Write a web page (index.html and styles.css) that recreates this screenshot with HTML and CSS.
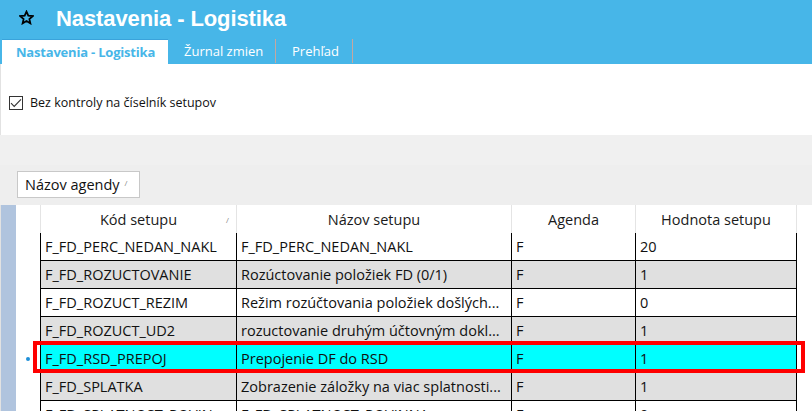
FILE: index.html
```html
<!DOCTYPE html>
<html lang="sk">
<head>
<meta charset="utf-8">
<title>Nastavenia - Logistika</title>
<link rel="stylesheet" href="styles.css">
</head>
<body>
<div class="app">
  <header class="header">
    <div class="titlebar">
      <svg class="star" width="15" height="15" viewBox="0 0 24 24"><path d="M12 2.5l2.9 6.6 7.1.6-5.4 4.7 1.6 7-6.2-3.7-6.2 3.7 1.6-7L2 9.7l7.1-.6z" fill="none" stroke="#000" stroke-width="2.8" stroke-linejoin="miter"/></svg>
      <h1 class="title">Nastavenia - Logistika</h1>
    </div>
    <nav class="tabs">
      <div class="tab tab-active">Nastavenia - Logistika</div>
      <div class="tab tab-2">Žurnal zmien</div>
      <div class="tab tab-3">Prehľad</div>
    </nav>
  </header>
  <section class="options">
    <label class="check">
      <span class="box"><svg width="12" height="10" viewBox="0 0 12 10"><path d="M1 5.2l3.2 3.2L11 1.3" fill="none" stroke="#333" stroke-width="1.1"/></svg></span>
      <span class="check-label">Bez kontroly na číselník setupov</span>
    </label>
  </section>
  <section class="group-panel">
    <div class="group-btn">Názov agendy <span class="sort">/</span></div>
  </section>
  <section class="grid">
    <div class="strip"></div>
    <div class="gridbody">
      <div class="row head">
        <div class="ind"></div>
        <div class="hc">Kód setupu<span class="sort hs">/</span></div>
        <div class="hc">Názov setupu</div>
        <div class="hc">Agenda</div>
        <div class="hc">Hodnota setupu</div>
      </div>
      <div class="row">
        <div class="ind"></div>
        <div class="c">F_FD_PERC_NEDAN_NAKL</div>
        <div class="c">F_FD_PERC_NEDAN_NAKL</div>
        <div class="c">F</div>
        <div class="c">20</div>
      </div>
      <div class="row alt">
        <div class="ind"></div>
        <div class="c">F_FD_ROZUCTOVANIE</div>
        <div class="c">Rozúctovanie položiek FD (0/1)</div>
        <div class="c">F</div>
        <div class="c">1</div>
      </div>
      <div class="row">
        <div class="ind"></div>
        <div class="c">F_FD_ROZUCT_REZIM</div>
        <div class="c">Režim rozúčtovania položiek došlých...</div>
        <div class="c">F</div>
        <div class="c">0</div>
      </div>
      <div class="row alt">
        <div class="ind"></div>
        <div class="c">F_FD_ROZUCT_UD2</div>
        <div class="c">rozuctovanie druhým účtovným dokl...</div>
        <div class="c">F</div>
        <div class="c">1</div>
      </div>
      <div class="row sel">
        <div class="ind"><span class="dot"></span></div>
        <div class="c">F_FD_RSD_PREPOJ</div>
        <div class="c">Prepojenie DF do RSD</div>
        <div class="c">F</div>
        <div class="c">1</div>
      </div>
      <div class="row alt">
        <div class="ind"></div>
        <div class="c">F_FD_SPLATKA</div>
        <div class="c">Zobrazenie záložky na viac splatnosti...</div>
        <div class="c">F</div>
        <div class="c">1</div>
      </div>
      <div class="row">
        <div class="ind"></div>
        <div class="c">F_FD_SPLATNOST_POVIN</div>
        <div class="c">F_FD_SPLATNOST_POVINNA</div>
        <div class="c">F</div>
        <div class="c">0</div>
      </div>
    </div>
  </section>
</div>
</body>
</html>
```

FILE: styles.css
```css
html, body {
  margin: 0;
  padding: 0;
  background: #ffffff;
}
body {
  font-family: "Open Sans", "Noto Sans", sans-serif;
  color: #000;
}
.app {
  width: 812px;
  height: 411px;
  overflow: hidden;
  display: flex;
  flex-direction: column;
}
.header {
  background: #47b6e8;
  height: 64px;
  display: flex;
  flex-direction: column;
  flex: none;
}
.titlebar {
  height: 39px;
  display: flex;
  align-items: center;
}
.star {
  margin-left: 19px;
  margin-top: -4px;
}
.title {
  margin: -2px 0 0 22px;
  font-family: "Liberation Sans", Arial, sans-serif;
  font-weight: bold;
  font-size: 22px;
  color: #ffffff;
  letter-spacing: -0.1px;
}
.tabs {
  height: 25px;
  display: flex;
  align-items: stretch;
}
.tab {
  display: flex;
  align-items: center;
  font-size: 13px;
  color: #ffffff;
  padding: 0 0 0 16px;
  border-right: 1px solid #c4a7a0;
  margin-bottom: 1px;
  white-space: nowrap;
  box-sizing: border-box;
}
.tab-active {
  margin-left: 2px;
  margin-bottom: 0;
  width: 166px;
  padding: 0 0 0 14px;
  background: #ffffff;
  border-top: 1px solid #3aa3db;
  border-right: none;
  color: #47b6e8;
  font-weight: bold;
  font-size: 13px;
  letter-spacing: -0.2px;
}
.tab-2 {
  width: 108px;
}
.tab-3 {
  width: 77px;
}
.options {
  flex: none;
  height: 71px;
  border-left: 1px solid #e2e2e2;
  background: #fff;
  display: flex;
  align-items: center;
  padding-left: 8px;
  padding-top: 6px;
  box-sizing: border-box;
}
.check {
  display: flex;
  align-items: center;
  font-size: 12.5px;
  color: #111;
}
.box {
  width: 14px;
  height: 14px;
  box-sizing: border-box;
  border: 1px solid #333;
  display: flex;
  align-items: center;
  justify-content: center;
  margin-right: 7px;
  background: #fff;
}
.group-panel {
  flex: none;
  height: 70px;
  box-sizing: border-box;
  padding: 36px 0 0 17px;
  background: linear-gradient(#f0f0f0 30px, #eeeeee 30px);
}
.group-btn {
  display: inline-flex;
  align-items: center;
  height: 27px;
  width: 123px;
  box-sizing: border-box;
  border: 1px solid #c8c8c8;
  background: #fff;
  padding-left: 7px;
  font-size: 14.5px;
  color: #111;
  white-space: nowrap;
}
.sort {
  font-size: 8px;
  color: #888;
  margin-left: 5px;
  margin-top: -4px;
}
.grid {
  flex: 1;
  display: flex;
  background: #fff;
  border-left: 1px solid #e2e2e2;
}
.strip {
  width: 15px;
  background: #b0c4de;
  flex: none;
}
.gridbody {
  flex: 1;
  background: #fff;
}
.row {
  display: grid;
  grid-template-columns: 24px 196px 275px 124px 162px;
  height: 28px;
  position: relative;
}
.ind {
  display: flex;
  align-items: center;
  justify-content: center;
}
.hc {
  position: relative;
  border-left: 1px solid #e4e4e4;
  display: flex;
  align-items: center;
  justify-content: center;
  font-size: 14.5px;
  color: #1a1a1a;
  white-space: nowrap;
}
.hc:last-child {
  border-right: 1px solid #e4e4e4;
}
.hs {
  position: absolute;
  right: 7px;
  top: 9px;
  margin: 0;
}
.c {
  box-sizing: border-box;
  border-left: 1px solid #000;
  border-bottom: 1px solid #000;
  display: flex;
  align-items: center;
  padding-left: 4px;
  font-size: 14.5px;
  white-space: nowrap;
  overflow: hidden;
  color: #111;
}
.c:last-child {
  border-right: 1px solid #000;
}
.alt .c {
  background: #e0e0e0;
}
.sel .c {
  background: #00ffff;
  border-top: 1px dotted #333;
  margin-top: -1px;
}
.sel::after {
  content: "";
  position: absolute;
  left: 17px;
  top: -4px;
  width: 772px;
  height: 32px;
  box-sizing: border-box;
  border: 4px solid #ff0000;
  pointer-events: none;
}
.dot {
  width: 4px;
  height: 4px;
  border-radius: 50%;
  background: #1e8fd8;
}
```
